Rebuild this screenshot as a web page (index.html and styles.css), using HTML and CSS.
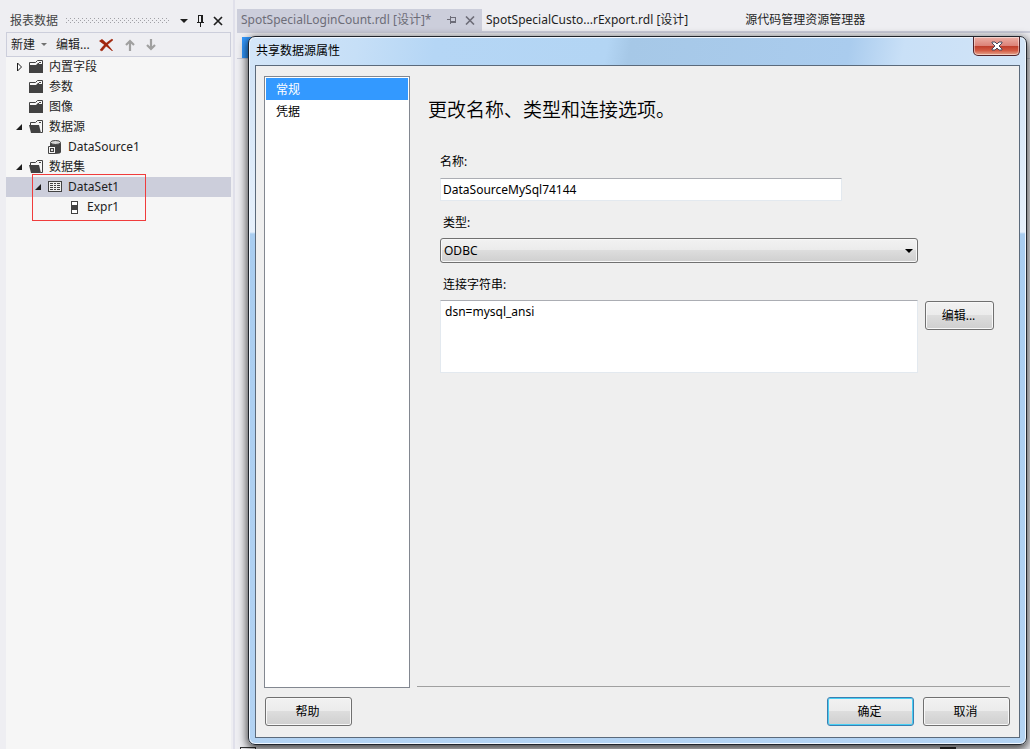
FILE: index.html
```html
<!DOCTYPE html>
<html lang="zh-CN">
<head>
  <meta charset="UTF-8">
  <meta name="viewport" content="width=device-width, initial-scale=1.0">
  <title>共享数据源属性</title>
  <link rel="stylesheet" href="styles.css">
</head>
<body>
  <div class="workspace">
    <!-- Report data panel -->
    <aside class="sidebar">
      <div class="panel-header">
        <span>报表数据</span>
        <span class="grip"></span>
        <button class="icon-btn" aria-label="窗口位置">
          <svg width="8" height="12" viewBox="0 0 8 12"><path d="M0 4h8L4 8z" fill="#1e1e1e"/></svg>
        </button>
        <button class="icon-btn" aria-label="自动隐藏">
          <svg width="9" height="12" viewBox="0 0 9 12" shape-rendering="crispEdges"><path d="M2 0h5v7h1v1H5v4H4V8H1V7h1zM3 1v6h2V1z" fill="#1e1e1e"/></svg>
        </button>
        <button class="icon-btn" aria-label="关闭">
          <svg width="10" height="10" viewBox="0 0 10 10"><path d="M1 1l8 8M9 1L1 9" stroke="#1e1e1e" stroke-width="1.700"/></svg>
        </button>
      </div>

      <div class="toolbar">
        <button class="tool-btn new-btn">新建
          <svg width="6" height="4" viewBox="0 0 6 4"><path d="M0 0h6L3 3z" fill="#717171"/></svg>
        </button>
        <button class="tool-btn">编辑...</button>
        <button class="tool-btn" aria-label="删除">
          <svg width="15" height="14" viewBox="0 0 15 14"><path d="M0 3L3 1Q8 5 14 13L13 13Q7 8 0 3z" fill="#a1260d"/><path d="M13 1l1 1Q7 7 3 13L1 12Q6 5 13 1z" fill="#a1260d" stroke="#a1260d" stroke-width=".5"/></svg>
        </button>
        <button class="tool-btn" aria-label="上移">
          <svg width="10" height="12" viewBox="0 0 10 12"><path d="M5 12V2M1 6l4-4 4 4" fill="none" stroke="#a0a0a0" stroke-width="2.200"/></svg>
        </button>
        <button class="tool-btn" aria-label="下移">
          <svg width="10" height="12" viewBox="0 0 10 12"><path d="M5 0v10M1 6l4 4 4-4" fill="none" stroke="#a0a0a0" stroke-width="2.200"/></svg>
        </button>
      </div>

      <ul class="tree">
        <li class="row">
          <span class="arrow"><svg width="7" height="10" viewBox="0 0 7 10"><path d="M2.500 1v8l4-4z" fill="#fff" stroke="#1e1e1e"/></svg></span>
          <svg class="icon" viewBox="0 0 14 14"><use href="#folder"/></svg>内置字段
        </li>
        <li class="row">
          <span class="arrow"></span>
          <svg class="icon" viewBox="0 0 14 14"><use href="#folder"/></svg>参数
        </li>
        <li class="row">
          <span class="arrow"></span>
          <svg class="icon" viewBox="0 0 14 14"><use href="#folder"/></svg>图像
        </li>
        <li class="row">
          <span class="arrow"><svg width="7" height="7" viewBox="0 0 7 7"><path d="M7 0v6H1z" fill="#1e1e1e"/></svg></span>
          <svg class="icon" viewBox="0 0 14 14"><use href="#folder-open"/></svg>数据源
        </li>
        <li class="row level-1">
          <span class="arrow"></span>
          <svg class="icon" viewBox="0 0 14 14">
            <path d="M2 3v5h5v6c4 0 6-1 6-2V3z" fill="#424242"/>
            <ellipse cx="7.500" cy="2.500" rx="5" ry="2" fill="#d8d8d8" stroke="#424242"/>
            <path d="M.5 6.500h7v7h-7z" fill="#f6f6f6" stroke="#424242"/>
            <path d="M2 8h4v4H2z" fill="#424242"/><path d="M3 9h2v2H3z" fill="#ddd"/>
          </svg>DataSource1
        </li>
        <li class="row">
          <span class="arrow"><svg width="7" height="7" viewBox="0 0 7 7"><path d="M7 0v6H1z" fill="#1e1e1e"/></svg></span>
          <svg class="icon" viewBox="0 0 14 14"><use href="#folder-open"/></svg>数据集
        </li>
        <li class="row level-1 selected">
          <span class="arrow"><svg width="7" height="7" viewBox="0 0 7 7"><path d="M7 0v6H1z" fill="#1e1e1e"/></svg></span>
          <svg class="icon" viewBox="0 0 14 14" shape-rendering="crispEdges">
            <path d="M0 1h14v11H0z" fill="#424242"/><path d="M1 2h12v9H1z" fill="#f0f0f0"/>
            <path d="M2 3h3v1H2zM6 3h2v1H6zM9 3h3v1H9zM2 5h3v1H2zM6 5h2v1H6zM9 5h3v1H9zM2 7h3v1H2zM6 7h2v1H6zM9 7h3v1H9zM2 9h3v1H2zM6 9h2v1H6zM9 9h3v1H9z" fill="#424242"/>
          </svg>DataSet1
        </li>
        <li class="row level-2">
          <span class="arrow"></span>
          <svg class="icon" viewBox="0 0 14 14" shape-rendering="crispEdges"><path d="M4 1h7v13H4z" fill="#424242"/><path d="M5 2h5v3H5zM5 10h5v3H5z" fill="#fff"/></svg>Expr1
        </li>
        <li class="highlight" aria-hidden="true"></li>
      </ul>
    </aside>

    <main class="documents">
      <nav class="tabs">
        <a href="#" class="tab active">SpotSpecialLoginCount.rdl [设计]*
          <svg class="tab-pin" width="9" height="8" viewBox="0 0 9 8" shape-rendering="crispEdges"><path d="M0 3h3V0h1v1h5v6H4v1H3V4H0zM4 2v3h4V2z" fill="#6d6d78"/></svg>
          <svg width="10" height="9" viewBox="0 0 10 9"><path d="M1 .5l8 8M9 .5l-8 8" stroke="#6d6d78" stroke-width="1.600"/></svg>
        </a>
        <a href="#" class="tab second">SpotSpecialCusto...rExport.rdl [设计]</a>
        <a href="#" class="tab">源代码管理资源管理器</a>
      </nav>
      <div class="doc-toolbar"><span class="doc-mark"></span></div>
      <div class="doc-canvas"><span class="doc-handle"></span><span class="doc-handle dark"></span></div>
    </main>
  </div>

  <!-- Data source dialog -->
  <section class="dialog" role="dialog" aria-labelledby="dialogTitle">
    <header class="title-bar">
      <span id="dialogTitle">共享数据源属性</span>
      <button class="close-btn" aria-label="关闭">
        <svg width="12" height="10" viewBox="0 0 12 10"><path d="M1 1h3l2 2 2-2h3v1L8 5l3 3v1H8L6 7 4 9H1V8l3-3-3-3z" fill="#fff" stroke="#4a4a5c"/></svg>
      </button>
    </header>
    <form class="dialog-body">
      <div class="pages">
        <ul class="page-list">
          <li><a href="#" class="current">常规</a></li>
          <li><a href="#">凭据</a></li>
        </ul>
        <div class="page">
          <h1>更改名称、类型和连接选项。</h1>
          <div class="fields">
            <label for="name">名称:</label>
            <input type="text" id="name" value="DataSourceMySql74144">
            <label for="type" class="inset">类型:</label>
            <div class="select-box">
              <select id="type"><option>ODBC</option></select>
            </div>
            <label for="connection" class="inset">连接字符串:</label>
            <textarea id="connection">dsn=mysql_ansi</textarea>
            <button type="button" class="btn">编辑...</button>
          </div>
        </div>
      </div>
      <footer class="actions">
        <button type="button" class="btn">帮助</button>
        <button type="submit" class="btn primary">确定</button>
        <button type="button" class="btn">取消</button>
      </footer>
    </form>
  </section>

  <svg class="symbols" width="0" height="0" aria-hidden="true">
    <symbol id="folder" viewBox="0 0 14 14">
      <path d="M.5 5V2.500h6l2-2h5V5" fill="#f6f6f6" stroke="#424242"/>
      <path d="M0 5h7l2-2h1v1h4v9H0z" fill="#424242"/><path d="M10 2.500h2" stroke="#424242"/>
    </symbol>
    <symbol id="folder-open" viewBox="0 0 14 14">
      <path d="M1.500 6V2.500h5l2-2h5v12H12" fill="#f6f6f6" stroke="#424242"/>
      <path d="M0 5h10l2 8H2z" fill="#424242"/><path d="M10 2.500h2" stroke="#424242"/>
    </symbol>
  </svg>
</body>
</html>
```
FILE: styles.css
```css
* {
  margin: 0;
  padding: 0;
  box-sizing: border-box;
}

body {
  font-family: "Noto Sans", "Noto Sans CJK SC", sans-serif;
  font-size: 12px;
  line-height: 20px;
  color: #1e1e1e;
  background-color: #eeeef2;
}

button, input, select, textarea {
  font: inherit;
  color: #000;
}

a {
  color: inherit;
  text-decoration: none;
}

ul {
  list-style: none;
}

svg {
  display: block;
  flex: none;
}

.symbols {
  position: absolute;
}

.workspace {
  display: flex;
  height: 100vh;
  overflow: hidden;
}

/* Sidebar */
.sidebar {
  display: flex;
  flex-direction: column;
  flex: none;
  width: 235px;
  padding: 9px 2px 0 6px;
  border-right: 2px solid #e0e0ea;
}

.panel-header {
  display: flex;
  align-items: center;
  height: 23px;
  padding: 0 8px 0 4px;
  color: #444;
}

.grip {
  flex: 1;
  height: 5px;
  margin: 0 10px 0 8px;
  background-image:
    conic-gradient(at 1px 1px, transparent 75%, #a0a0a6 0),
    conic-gradient(at 1px 1px, transparent 75%, #a0a0a6 0);
  background-size: 4px 4px;
  background-position: 0 0, 2px 2px;
}

.icon-btn {
  margin-left: 8px;
  border: none;
  background: none;
}

.grip + .icon-btn {
  margin-left: 0;
}

.toolbar {
  display: flex;
  align-items: center;
  gap: 9px;
  height: 25px;
  padding: 0 4px;
  border: 1px solid #cccedb;
}

.tool-btn {
  border: none;
  background: none;
  color: #1e1e1e;
}

.tool-btn + .tool-btn[aria-label] + .tool-btn {
  margin-left: 2px;
}

.new-btn {
  display: flex;
  align-items: center;
  gap: 6px;
}

.tree {
  position: relative;
  flex: 1;
  background-color: #f6f6f6;
}

.row {
  display: flex;
  align-items: center;
  height: 20px;
  padding-left: 9px;
}

.level-1 {
  padding-left: 28px;
}

.level-2 {
  padding-left: 47px;
}

.selected {
  background-color: #cccedb;
}

.arrow {
  width: 14px;
}

.icon {
  width: 14px;
  height: 14px;
  margin-right: 6px;
}

.highlight {
  position: absolute;
  left: 26px;
  top: 117px;
  width: 114px;
  height: 47px;
  border: 1px solid #f03c3c;
}

/* Documents */
.documents {
  display: flex;
  flex-direction: column;
  flex: 1;
  padding: 9px 0 0 2px;
}

.tabs {
  display: flex;
  border-bottom: 2px solid #cccedb;
  white-space: nowrap;
}

.tab {
  display: flex;
  align-items: center;
  height: 22px;
  padding: 0 4px;
}

.tab.active {
  gap: 9px;
  width: 245px;
  padding-right: 7px;
  background-color: #cccedb;
  color: #6d6d78;
}

.tab-pin {
  margin-left: auto;
}

.second {
  margin-right: 49px;
}

.doc-toolbar {
  height: 26px;
  padding: 4px 5px 0;
  border-bottom: 1px solid #cccedb;
}

.doc-mark {
  display: block;
  width: 20px;
  height: 21px;
  background-color: #3399ff;
}

.doc-canvas {
  display: flex;
  justify-content: space-between;
  align-items: flex-end;
  flex: 1;
  padding: 0 74px 0 3px;
}

.doc-handle {
  width: 16px;
  height: 2px;
  border: 1px solid #333;
  border-bottom: none;
}

.doc-handle.dark {
  background-color: #333;
}

/* Dialog window, floats over the documents */
.dialog {
  position: absolute;
  top: 36px;
  right: 3px;
  bottom: 4px;
  left: 248px;
  display: flex;
  flex-direction: column;
  padding: 0 6px 6px;
  border: 1px solid #20252c;
  border-radius: 7px;
  background:
    linear-gradient(100deg, #d4e6f8 0%, #c6dff7 14%, #b5d6f5 24%, #b3d5f4 46%, #a6c8e7 49%, #aaccee 77%, #c9e0f7 84%, #d2e4f7 100%) top / 100% 29px no-repeat,
    linear-gradient(#cfe2f6 0, #e6f0fb 195px, #a9cdf0 197px, #b3d3f3 100%);
  box-shadow: inset 0 0 0 1px #f0f7ff, 0 3px 10px 1px rgba(0, 0, 0, 0.75);
  color: #000;
}

.title-bar {
  display: flex;
  justify-content: space-between;
  height: 28px;
  padding-left: 1px;
  line-height: 28px;
}

.close-btn {
  display: flex;
  justify-content: center;
  align-items: center;
  width: 47px;
  height: 19px;
  border: 1px solid #51232a;
  border-top: none;
  border-radius: 0 0 5px 5px;
  background: linear-gradient(#edb0a6 0, #dc8278 48%, #bd3c2b 50%, #d35a43 75%, #e5a790 100%);
  box-shadow: inset 0 0 0 1px rgba(255, 255, 255, 0.45);
}

.dialog-body {
  display: flex;
  flex-direction: column;
  flex: 1;
  gap: 9px;
  padding: 10px 9px 11px 8px;
  border: 1px solid #5b6a7b;
  background-color: #efefef;
}

.pages {
  display: flex;
  flex: 1;
  gap: 7px;
}

.page-list {
  flex: none;
  width: 146px;
  padding: 1px;
  border: 1px solid #828790;
  background-color: #fff;
}

.page-list a {
  display: block;
  height: 22px;
  padding: 0 10px;
  line-height: 24px;
}

.page-list .current {
  background-color: #3399ff;
  color: #fff;
}

.page {
  flex: 1;
  margin-bottom: 1px;
  padding: 20px 16px 0 11px;
  border-bottom: 1px solid #a0a0a0;
}

.page h1 {
  font-size: 19px;
  font-weight: 350;
  line-height: 28px;
}

/* Right column holds the button beside the connection string */
.fields {
  display: grid;
  grid-template-columns: 1fr 69px;
  column-gap: 7px;
  margin: 26px 0 0 12px;
}

.fields label {
  grid-column: 1 / -1;
  height: 28px;
  line-height: 24px;
}

.fields .inset {
  height: 27px;
  margin-top: 10px;
  padding-left: 3px;
}

.fields input,
.fields textarea {
  border: 1px solid #e3e9ef;
  border-top-color: #abadb3;
  background-color: #fff;
}

.fields input {
  width: 84%;
  height: 23px;
  padding: 0 2px;
}

.select-box {
  position: relative;
}

.select-box::after {
  content: "";
  position: absolute;
  top: 11px;
  right: 5px;
  border: 4px solid transparent;
  border-top-color: #000;
  border-bottom: none;
  pointer-events: none;
}

.select-box select {
  display: block;
  appearance: none;
  width: 100%;
  height: 25px;
  padding: 0 3px;
}

.select-box select,
.btn {
  border: 1px solid #707070;
  border-radius: 3px;
  background: linear-gradient(#f2f2f2 0, #ebebeb 48%, #dddddd 50%, #cfcfcf 100%);
  box-shadow: inset 0 0 0 1px #f8f8f8;
}

.fields textarea {
  height: 73px;
  padding: 1px 4px;
  resize: none;
}

.btn {
  width: 87px;
  height: 29px;
  padding-right: 2px;
}

.fields .btn {
  width: 69px;
  margin-top: 1px;
}

.actions {
  display: flex;
  gap: 9px;
  padding-left: 1px;
}

.btn.primary {
  margin-left: auto;
  border-color: #3c7fb1;
  box-shadow: inset 0 0 0 1px #48d0f5;
}
```
